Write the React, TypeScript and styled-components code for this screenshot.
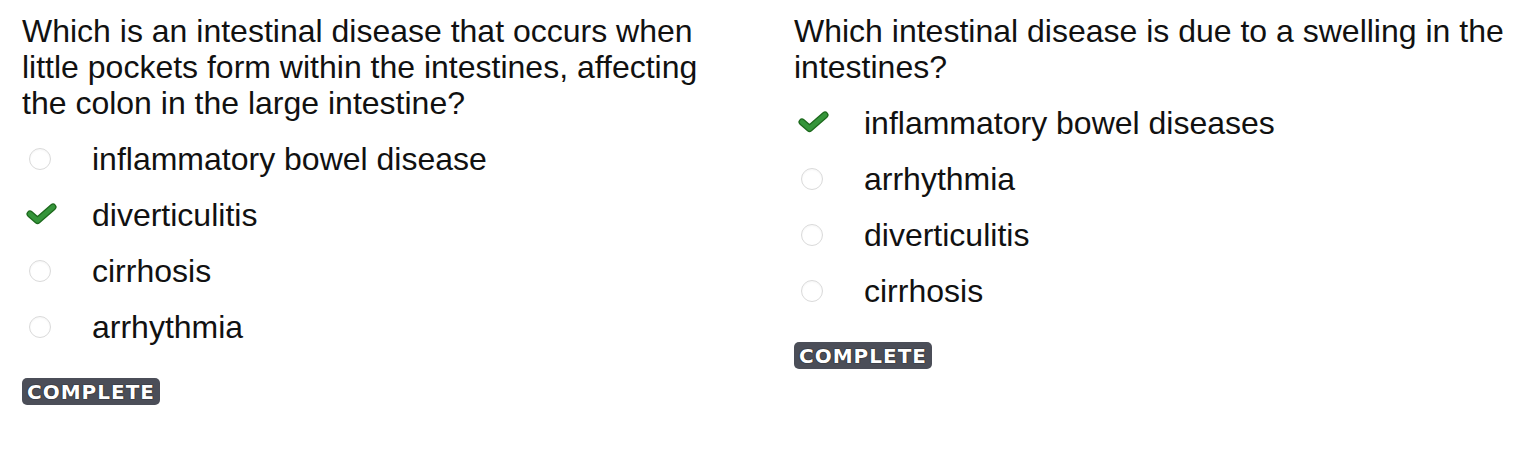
import React from "react";
import styled, { createGlobalStyle } from "styled-components";

const Global = createGlobalStyle`
  html, body { margin: 0; padding: 0; background: #ffffff; }
  body { font-family: "Liberation Sans", Arial, sans-serif; color: #111; }
`;

const Page = styled.div`
  display: grid;
  grid-template-columns: 720px 720px;
  column-gap: 52px;
  padding: 13px 0 0 22px;
  align-items: start;
`;

const Card = styled.section`
  display: flex;
  flex-direction: column;
`;

const Question = styled.p`
  margin: 0 0 20px 0;
  font-size: 32px;
  line-height: 36px;
  color: #111;
`;

const OptionList = styled.ul`
  list-style: none;
  margin: 0;
  padding: 0;
  display: flex;
  flex-direction: column;
  gap: 20px;
`;

const OptionRow = styled.li`
  display: flex;
  align-items: center;
  height: 36px;
`;

const IconCell = styled.span<{ $lift: number; $nudge: number }>`
  width: 36px;
  height: 36px;
  margin-right: 34px;
  display: flex;
  align-items: center;
  justify-content: center;
  transform: translate(${(p) => p.$nudge}px, ${(p) => -p.$lift}px);
`;

const Radio = styled.span`
  width: 22px;
  height: 22px;
  border-radius: 50%;
  border: 1px solid #dadada;
  box-sizing: border-box;
  background: #fff;
  box-shadow: inset 0 1px 2px rgba(0, 0, 0, 0.04);
`;

const OptionText = styled.span`
  font-size: 32px;
  line-height: 36px;
  color: #111;
  white-space: nowrap;
`;

const Badge = styled.span`
  align-self: flex-start;
  margin-top: 33px;
  display: inline-flex;
  align-items: center;
  justify-content: center;
  height: 27px;
  padding: 0 5px;
  background: #4b4e58;
  border-radius: 5px;
  color: #ffffff;
  font-family: "DejaVu Sans", Verdana, sans-serif;
  font-weight: bold;
  font-size: 20px;
  letter-spacing: 1px;
  text-shadow: 0 0 1px #111, 0 0 1px #111;
`;

const Check = () => (
  <svg width="34" height="24" viewBox="0 0 34 24" aria-hidden="true">
    <path
      d="M5 13 L12.5 19.5 L28 6"
      fill="none"
      stroke="#1d691d"
      strokeWidth="7"
      strokeLinecap="round"
      strokeLinejoin="round"
    />
    <path
      d="M5 13 L12.5 19.5 L28 6"
      fill="none"
      stroke="#35953a"
      strokeWidth="4.5"
      strokeLinecap="round"
      strokeLinejoin="round"
    />
  </svg>
);

type Q = { question: string; options: string[]; correct: number };

const data: Q[] = [
  {
    question:
      "Which is an intestinal disease that occurs when little pockets form within the intestines, affecting the colon in the large intestine?",
    options: ["inflammatory bowel disease", "diverticulitis", "cirrhosis", "arrhythmia"],
    correct: 1,
  },
  {
    question: "Which intestinal disease is due to a swelling in the intestines?",
    options: ["inflammatory bowel diseases", "arrhythmia", "diverticulitis", "cirrhosis"],
    correct: 0,
  },
];

export default function App() {
  return (
    <>
      <Global />
      <Page>
        {data.map((q, qi) => (
          <Card key={qi}>
            <Question>{q.question}</Question>
            <OptionList>
              {q.options.map((o, oi) => {
                const correct = oi === q.correct;
                return (
                  <OptionRow key={oi}>
                    <IconCell $lift={correct ? 2 : 0} $nudge={correct ? 2 : 0}>
                      {correct ? <Check /> : <Radio />}
                    </IconCell>
                    <OptionText>{o}</OptionText>
                  </OptionRow>
                );
              })}
            </OptionList>
            <Badge>COMPLETE</Badge>
          </Card>
        ))}
      </Page>
    </>
  );
}
